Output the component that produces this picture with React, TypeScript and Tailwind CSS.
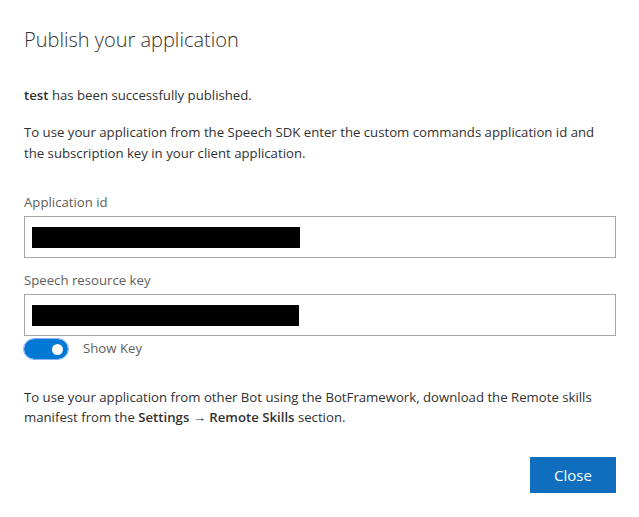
import React from "react";

const font = { fontFamily: '"Open Sans", "Noto Sans", sans-serif' };

function Field({ label, barWidth }: { label: string; barWidth: string }) {
  return (
    <div className="flex flex-col">
      <label className="text-[13.2px] leading-[20px] text-[#605e5c] pt-[4px] pb-[4px]">{label}</label>
      <div className="h-[42px] border border-[#a6a6a6] flex items-center px-[7px]">
        <div className={`h-[21px] bg-black ${barWidth}`} />
      </div>
    </div>
  );
}

export default function App() {
  return (
    <div style={font} className="w-[639px] h-[517px] bg-white text-[#323130] px-[24px] pt-[27px]">
      <h1 className="text-[20px] leading-[26px] font-light text-[#323130]">Publish your application</h1>

      <p className="mt-[32px] text-[13.2px] leading-[20px]">
        <span className="font-semibold">test</span> has been successfully published.
      </p>
      <p className="mt-[17px] text-[13.2px] leading-[21px] w-[592px]">
        To use your application from the Speech SDK enter the custom commands application id and the subscription key in your client application.
      </p>

      <div className="mt-[24px] w-[592px] flex flex-col gap-[8px]">
        <Field label="Application id" barWidth="w-[268px]" />
        <Field label="Speech resource key" barWidth="w-[267px]" />
      </div>

      <div className="mt-[3px] flex items-center gap-[15px]">
        <div className="w-[44px] h-[20px] rounded-full bg-[#0078d4] outline outline-1 outline-[#8ab4f8] flex items-center justify-end pr-[5px]">
          <div className="w-[11px] h-[11px] rounded-full bg-white" />
        </div>
        <span className="text-[13.2px] text-[#605e5c]">Show Key</span>
      </div>

      <p className="mt-[28px] text-[13.2px] leading-[20px] w-[592px]">
        To use your application from other Bot using the BotFramework, download the Remote skills manifest from the{" "}
        <span className="font-semibold">Settings → Remote Skills</span> section.
      </p>

      <div className="mt-[30px] w-[592px] flex justify-end">
        <button className="w-[86px] h-[36px] bg-[#106ebe] text-white text-[15px]">Close</button>
      </div>
    </div>
  );
}
